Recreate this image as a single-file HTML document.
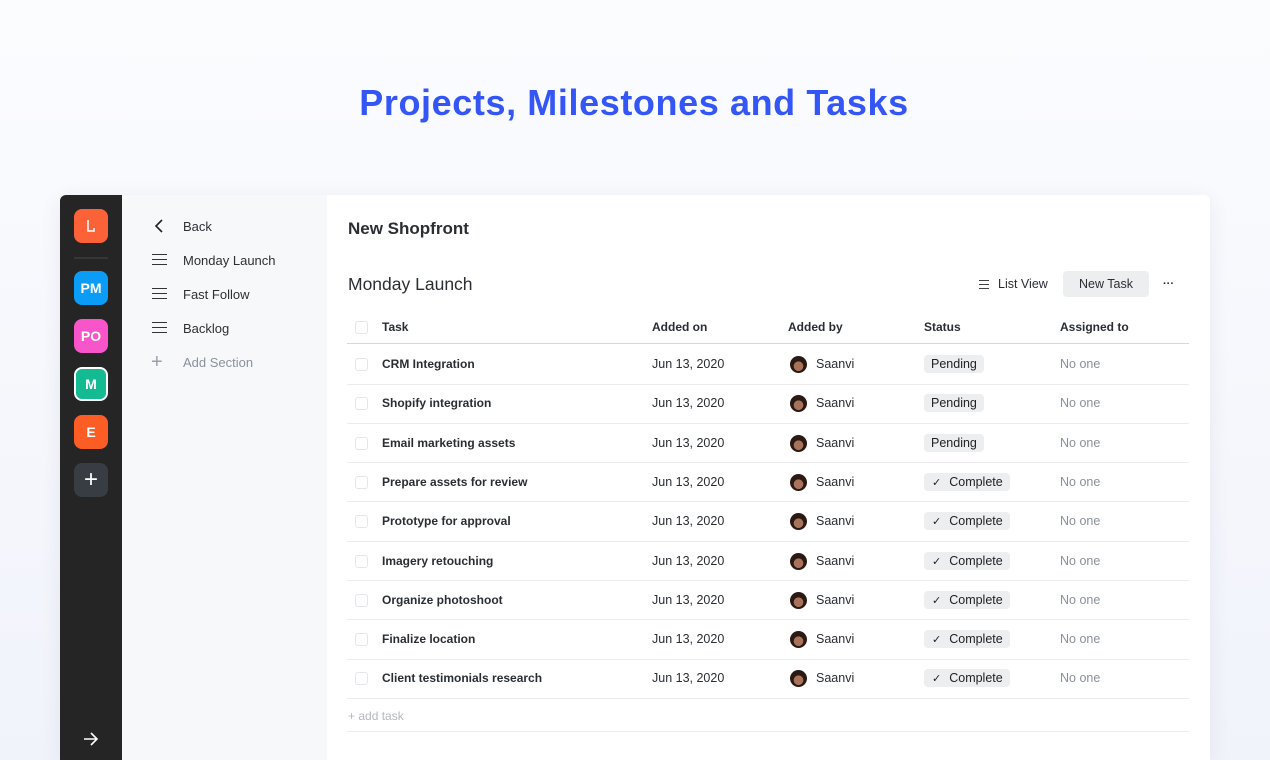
<!DOCTYPE html>
<html><head><style>
*{margin:0;padding:0;box-sizing:border-box}
html,body{width:1270px;height:760px;overflow:hidden}
body{background:linear-gradient(#fbfcfe,#f1f3fb);font-family:"Liberation Sans",sans-serif;position:relative;color:#2a2e33}
h1{position:absolute;top:82px;left:0;width:1268px;text-align:center;font-size:36px;font-weight:bold;color:#3556f6;letter-spacing:0.6px}
.card{position:absolute;left:60px;top:195px;width:1150px;height:565px;background:#fff;border-radius:6px 6px 0 0;overflow:hidden;box-shadow:0 4px 20px rgba(40,50,90,.08)}
.dark{position:absolute;left:0;top:0;width:62px;height:100%;background:#252525}
.ic{position:absolute;left:14px;width:34px;height:34px;border-radius:8px;color:#fff;font-weight:bold;font-size:14px;display:flex;align-items:center;justify-content:center}
.side{position:absolute;left:62px;top:0;width:205px;height:100%;background:#f7f8fa}
.si{position:absolute;left:61px;font-size:13px;color:#2d3035}
.hb{position:absolute;left:30px;width:15px;height:11px;border-top:1.5px solid #333;border-bottom:1.5px solid #333}
.hb:after{content:"";position:absolute;left:0;right:0;top:3.5px;border-top:1.5px solid #333}
.t{position:absolute;font-size:12.5px;white-space:nowrap}
.b{font-size:12px;font-weight:bold}
.cb{position:absolute;left:295px;width:13px;height:13px;border:1px solid #e4e6e9;border-radius:3px}
.ln{position:absolute;left:287px;width:842px;border-top:1px solid #ececee}
.pill{position:absolute;left:864px;height:18px;background:#eceef0;border-radius:4px;font-size:12.5px;padding:2px 7px;color:#222}
.av{position:absolute;left:730px;width:17px;height:17px;border-radius:50%;background:radial-gradient(circle at 50% 60%,#a8735a 0 35%,#2b1a14 37%);}
</style></head><body>
<h1>Projects, Milestones and Tasks</h1>
<div class="card">
<div class="dark">
<div class="ic" style="top:14px;background:#fc6237"><svg width="14" height="16" viewBox="0 0 14 16"><path d="M4 2v11h6v-3" stroke="#fff" stroke-width="1.5" fill="none"/></svg></div>
<div style="position:absolute;left:14px;top:62px;width:34px;border-top:2px solid #363636"></div>
<div class="ic" style="top:76px;background:#0b9cf7">PM</div>
<div class="ic" style="top:124px;background:#f755c9">PO</div>
<div class="ic" style="top:172px;background:#14bb92;border:2px solid #fff">M</div>
<div class="ic" style="top:220px;background:#fb5d25">E</div>
<div class="ic" style="top:268px;background:#373d42;font-size:24px;font-weight:normal">+</div>
<svg style="position:absolute;left:23px;top:537px" width="16" height="14" viewBox="0 0 16 14"><path d="M1 7h13M8 1l6 6-6 6" stroke="#fff" stroke-width="1.6" fill="none"/></svg>
</div>
<div class="side">
<svg style="position:absolute;left:32px;top:24px" width="10" height="14" viewBox="0 0 10 14"><path d="M8 1L2 7l6 6" stroke="#222" stroke-width="1.6" fill="none"/></svg>
<div class="si" style="top:24px">Back</div>
<div class="hb" style="top:59px"></div><div class="si" style="top:58px">Monday Launch</div>
<div class="hb" style="top:93px"></div><div class="si" style="top:92px">Fast Follow</div>
<div class="hb" style="top:127px"></div><div class="si" style="top:126px">Backlog</div>
<div style="position:absolute;left:29px;top:156px;font-size:20px;color:#9aa0a8;font-weight:300">+</div>
<div class="si" style="top:160px;color:#8a929b">Add Section</div>
</div>
<div class="t" style="left:288px;top:24px;font-size:17px;font-weight:bold;color:#2b2f33">New Shopfront</div>
<div class="t" style="left:288px;top:79px;font-size:17.5px;color:#2b2f33">Monday Launch</div>
<div style="position:absolute;left:919px;top:85px;width:10px;height:9px;border-top:1.3px solid #444;border-bottom:1.3px solid #444"><div style="margin-top:2.5px;border-top:1.3px solid #444"></div></div>
<div class="t" style="left:938px;top:82px">List View</div>
<div style="position:absolute;left:1003px;top:76px;width:86px;height:26px;background:#eceef0;border-radius:4px;font-size:12.5px;text-align:center;line-height:26px">New Task</div>
<div class="t" style="left:1103px;top:83px;font-weight:bold;font-size:11px">···</div>
<div class="cb" style="top:126px"></div>
<div class="t b" style="left:322px;top:125px">Task</div>
<div class="t b" style="left:592px;top:125px">Added on</div>
<div class="t b" style="left:728px;top:125px">Added by</div>
<div class="t b" style="left:864px;top:125px">Status</div>
<div class="t b" style="left:1000px;top:125px">Assigned to</div>
<div class="ln" style="top:148px;border-color:#d6d8db"></div>
<div id="rows"></div>
<div class="t" style="left:288px;top:514px;color:#b4b8bd;font-size:12px">+ add task</div>
<div class="ln" style="top:536px"></div>
</div>
<script>
var names=["CRM Integration","Shopify integration","Email marketing assets","Prepare assets for review","Prototype for approval","Imagery retouching","Organize photoshoot","Finalize location","Client testimonials research"];
var h="";
names.forEach(function(n,i){var y=169+i*39.3;
h+='<div class="cb" style="top:'+(y-6)+'px"></div><div class="t b" style="left:322px;top:'+(y-7)+'px">'+n+'</div>';
h+='<div class="t" style="left:592px;top:'+(y-7)+'px">Jun 13, 2020</div><div class="av" style="top:'+(y-8)+'px"></div><div class="t" style="left:756px;top:'+(y-7)+'px">Saanvi</div>';
h+='<div class="pill" style="top:'+(y-9)+'px">'+(i<3?'Pending':'<span style="font-size:11px;margin-right:8px;margin-left:1px">&#10003;</span>Complete')+'</div>';
h+='<div class="t" style="left:1000px;top:'+(y-7)+'px;color:#8a9199">No one</div><div class="ln" style="top:'+(y+19.5)+'px"></div>';});
document.getElementById("rows").outerHTML=h;
</script>
</body></html>
